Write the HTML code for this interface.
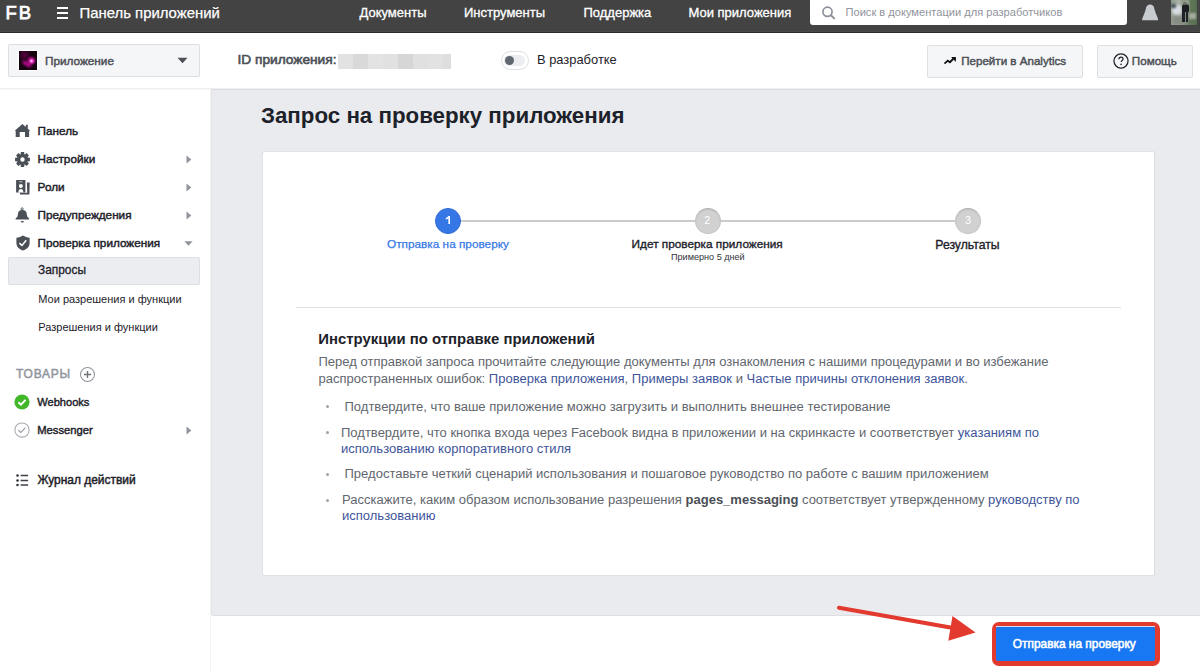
<!DOCTYPE html>
<html><head><meta charset="utf-8">
<style>
*{box-sizing:border-box;margin:0;padding:0}
html,body{width:1200px;height:672px;overflow:hidden;background:#fff;font-family:"Liberation Sans",sans-serif;color:#1d2129;position:relative}
.abs{position:absolute}
.t{position:absolute;white-space:pre;line-height:1}
</style></head><body>
<div class="abs" style="left:0px;top:0px;width:1200px;height:33px;background:#434343"></div>
<div class="abs" style="left:0px;top:31px;width:1200px;height:1px;background:#494949"></div>
<div class="abs" style="left:0px;top:32px;width:1200px;height:1px;background:#2b2b2b"></div>
<div class="t" style="left:5.40px;top:3.64px;font-size:18.5px;color:#fff;letter-spacing:2.1px;-webkit-text-stroke:0.75px #fff">FB</div>
<div class="abs" style="left:57px;top:7.2px;width:11px;height:2px;background:#fff"></div>
<div class="abs" style="left:57px;top:11.9px;width:11px;height:2px;background:#fff"></div>
<div class="abs" style="left:57px;top:16.7px;width:11px;height:2px;background:#fff"></div>
<div class="t" style="left:79.50px;top:6.48px;font-size:14.9px;color:#fff;-webkit-text-stroke:0.25px #fff">Панель приложений</div>
<div class="t" style="left:359.50px;top:6.19px;font-size:13px;color:#fff;-webkit-text-stroke:0.3px #fff">Документы</div>
<div class="t" style="left:464.00px;top:6.19px;font-size:13px;color:#fff;-webkit-text-stroke:0.3px #fff">Инструменты</div>
<div class="t" style="left:583.50px;top:6.19px;font-size:13px;color:#fff;-webkit-text-stroke:0.3px #fff">Поддержка</div>
<div class="t" style="left:688.50px;top:6.19px;font-size:13px;color:#fff;-webkit-text-stroke:0.3px #fff">Мои приложения</div>
<div class="abs" style="left:810px;top:0px;width:317px;height:25px;background:#fff;border-radius:0 0 3px 3px"></div>
<svg class="abs" style="left:821px;top:6px" width="15" height="15" viewBox="0 0 15 15"><circle cx="6.5" cy="5.8" r="4.6" fill="none" stroke="#8d929a" stroke-width="1.7"/><line x1="9.9" y1="9.2" x2="13.2" y2="12.4" stroke="#8d929a" stroke-width="2" stroke-linecap="round"/></svg>
<div class="t" style="left:845.50px;top:6.90px;font-size:11.1px;color:#90949c;">Поиск в документации для разработчиков</div>
<svg class="abs" style="left:1141px;top:3px" width="18" height="19" viewBox="0 0 18 19"><path d="M4.9 5.7C4.9 3.3 6.9 1.6 9.1 1.6C11.3 1.6 13.3 3.3 13.3 5.7C14.1 8.6 15.1 11.6 16.4 14.2C16.9 15.1 17.1 16.1 17.1 17.3H1.1C1.1 16.1 1.3 15.1 1.8 14.2C3.1 11.6 4.1 8.6 4.9 5.7Z" fill="#c8cbd0"/></svg>
<div class="abs" style="left:1171px;top:0;width:26px;height:25px;overflow:hidden;background:linear-gradient(90deg,#8f998b 0%,#a9b0a6 30%,#7f8a78 55%,#65765e 80%,#4a5e45 100%)"><div class="abs" style="left:1px;top:5px;width:10px;height:10px;background:#d9dde3;border-radius:40%;filter:blur(1.4px)"></div><div class="abs" style="left:0;top:4px;width:5px;height:4px;background:#46525e;filter:blur(0.9px)"></div><div class="abs" style="left:2px;top:16px;width:12px;height:9px;background:#878c84;filter:blur(1.5px)"></div><div class="abs" style="left:19px;top:0;width:7px;height:25px;background:#5d7356;filter:blur(1.5px)"></div><div class="abs" style="left:14px;top:0;width:4px;height:12px;background:#9aa796;filter:blur(1px)"></div><div class="abs" style="left:18px;top:13px;width:7px;height:6px;background:#a5ad9f;filter:blur(1.2px)"></div><div class="abs" style="left:10.5px;top:4px;width:7px;height:8px;background:#1c1e24;border-radius:3px 3px 1px 1px;filter:blur(0.5px)"></div><div class="abs" style="left:11px;top:11px;width:2.5px;height:11px;background:#20222b;filter:blur(0.4px)"></div><div class="abs" style="left:14.5px;top:11px;width:2.5px;height:11px;background:#20222b;filter:blur(0.4px)"></div><div class="abs" style="left:12px;top:1.5px;width:4px;height:3px;background:#6f6e66;border-radius:50%;filter:blur(0.4px)"></div></div>
<div class="abs" style="left:0px;top:33px;width:1200px;height:55px;background:#fff"></div>
<div class="abs" style="left:0px;top:88px;width:1200px;height:1px;background:#efeff0"></div>
<div class="abs" style="left:0px;top:89px;width:211px;height:1px;background:#f6f6f6"></div>
<div class="abs" style="left:211px;top:89px;width:989px;height:1px;background:#dcdde1"></div>
<div class="abs" style="left:8px;top:44px;width:192px;height:33px;background:#f5f6f7;border:1px solid #dddfe2;border-radius:2px"></div>
<div class="abs" style="left:18px;top:50px;width:20px;height:21px;background:#fff"></div>
<div class="abs" style="left:19px;top:51px;width:18px;height:19px;overflow:hidden;background:radial-gradient(circle at 32% 22%,rgba(150,0,110,0.55) 0,transparent 35%),#14020f"><div class="abs" style="left:3px;top:10.5px;width:10px;height:3.5px;border-radius:50%;background:#b80a8c;filter:blur(1.2px);transform:rotate(30deg)"></div><div class="abs" style="left:7px;top:5px;width:10px;height:9px;border-radius:50%;background:radial-gradient(circle at 55% 55%,#fff0ff 0,#f050d0 18%,rgba(180,10,140,0.75) 42%,rgba(120,0,90,0) 75%)"></div></div>
<div class="t" style="left:45.00px;top:54.85px;font-size:11.75px;-webkit-text-stroke:0.45px #4b4f56;color:#4b4f56;">Приложение</div>
<svg class="abs" style="left:177px;top:57px" width="11" height="7" viewBox="0 0 11 7"><path d="M0.5 0.8h10L5.5 6.3z" fill="#4b4f56"/></svg>
<div class="t" style="left:237.50px;top:53.10px;font-size:13.7px;-webkit-text-stroke:0.52px #4b4f56;color:#4b4f56;-webkit-text-stroke:0.62px #4b4f56">ID приложения:</div>
<div class="abs" style="left:338px;top:54px;width:15px;height:15px;background:#e2e2e2"></div>
<div class="abs" style="left:353px;top:54px;width:15px;height:15px;background:#d9d9d9"></div>
<div class="abs" style="left:368px;top:54px;width:15px;height:15px;background:#e3e3e3"></div>
<div class="abs" style="left:383px;top:54px;width:15px;height:15px;background:#e1e1e1"></div>
<div class="abs" style="left:398px;top:54px;width:15px;height:15px;background:#d6d6d6"></div>
<div class="abs" style="left:413px;top:54px;width:15px;height:15px;background:#e0e0e0"></div>
<div class="abs" style="left:428px;top:54px;width:15px;height:15px;background:#e2e2e2"></div>
<div class="abs" style="left:443px;top:54px;width:8px;height:15px;background:#dedede"></div>
<div class="abs" style="left:501px;top:51px;width:28px;height:19px;background:#fff;border:1px solid #dddfe2;border-radius:10px"></div>
<div class="abs" style="left:504px;top:55px;width:21px;height:11px;background:#ebedf0;border-radius:6px"></div>
<div class="abs" style="left:504.5px;top:55.8px;width:9.5px;height:9.5px;background:#606770;border-radius:50%"></div>
<div class="t" style="left:537.00px;top:54.08px;font-size:12.9px;color:#1d2129;">В разработке</div>
<div class="abs" style="left:927px;top:45px;width:156px;height:33px;background:#f5f6f7;border:1px solid #dddfe2;border-radius:2px"></div>
<svg class="abs" style="left:943px;top:56px" width="14" height="10" viewBox="0 0 14 10"><path d="M1.5 7.7L4.8 4.7 6.9 6.2 10.6 2.5" fill="none" stroke="#111" stroke-width="1.8"/><path d="M8.1 1.1H12.9V5.9z" fill="#111"/></svg>
<div class="t" style="left:961.20px;top:55.38px;font-size:11.6px;-webkit-text-stroke:0.44px #4b4f56;color:#4b4f56;">Перейти в Analytics</div>
<div class="abs" style="left:1097px;top:45px;width:96px;height:33px;background:#f5f6f7;border:1px solid #dddfe2;border-radius:2px"></div>
<svg class="abs" style="left:1112.6px;top:53.1px" width="16" height="16" viewBox="0 0 16 16"><circle cx="8" cy="8" r="7.05" fill="none" stroke="#1d2129" stroke-width="1.25"/><path d="M5.9 6.2c0-1.3 0.9-2.1 2.1-2.1s2.1 0.8 2.1 1.9c0 1.4-1.9 1.6-1.9 3.1" fill="none" stroke="#1d2129" stroke-width="1.2"/><circle cx="8.1" cy="11.4" r="0.8" fill="#1d2129"/></svg>
<div class="t" style="left:1131.80px;top:55.34px;font-size:11.65px;-webkit-text-stroke:0.44px #4b4f56;color:#4b4f56;">Помощь</div>
<div class="abs" style="left:0px;top:90px;width:211px;height:582px;background:#fff"></div>
<div class="abs" style="left:210px;top:90px;width:1px;height:582px;background:#f3f3f3"></div>
<div class="t" style="left:37.60px;top:125.05px;font-size:11.75px;-webkit-text-stroke:0.45px #1d2129;color:#1d2129;">Панель</div>
<div class="t" style="left:37.60px;top:153.05px;font-size:11.75px;-webkit-text-stroke:0.45px #1d2129;color:#1d2129;">Настройки</div>
<svg class="abs" style="left:186px;top:155px" width="6" height="9" viewBox="0 0 6 9"><path d="M0.5 0.6V8.4L5.3 4.5z" fill="#90949c"/></svg>
<div class="t" style="left:37.60px;top:181.05px;font-size:11.75px;-webkit-text-stroke:0.45px #1d2129;color:#1d2129;">Роли</div>
<svg class="abs" style="left:186px;top:183px" width="6" height="9" viewBox="0 0 6 9"><path d="M0.5 0.6V8.4L5.3 4.5z" fill="#90949c"/></svg>
<div class="t" style="left:37.60px;top:209.25px;font-size:11.75px;-webkit-text-stroke:0.45px #1d2129;color:#1d2129;">Предупреждения</div>
<svg class="abs" style="left:186px;top:211.2px" width="6" height="9" viewBox="0 0 6 9"><path d="M0.5 0.6V8.4L5.3 4.5z" fill="#90949c"/></svg>
<div class="t" style="left:37.60px;top:237.05px;font-size:11.75px;-webkit-text-stroke:0.45px #1d2129;color:#1d2129;">Проверка приложения</div>
<svg class="abs" style="left:184px;top:241px" width="9" height="5" viewBox="0 0 9 5"><path d="M0.3 0.3H8.7L4.5 4.7z" fill="#90949c"/></svg>
<svg class="abs" style="left:15px;top:123px" width="15" height="15" viewBox="0 0 15 15"><path d="M7.4 0.9L-0.1 7.5 0.7 8.3V14.1H4.7V8.9H10V14.1H14.1V8.3L14.9 7.5 12.8 5.7V1.7H10.8V3.9Z" fill="#4b4f56"/></svg>
<svg class="abs" style="left:15px;top:152px" width="15" height="15" viewBox="0 0 15 15"><path d="M12.55 5.60 L14.92 5.84 L14.92 9.16 L12.55 9.40 L12.42 9.73 L13.92 11.57 L11.57 13.92 L9.73 12.42 L9.40 12.55 L9.16 14.92 L5.84 14.92 L5.60 12.55 L5.27 12.42 L3.43 13.92 L1.08 11.57 L2.58 9.73 L2.45 9.40 L0.08 9.16 L0.08 5.84 L2.45 5.60 L2.58 5.27 L1.08 3.43 L3.43 1.08 L5.27 2.58 L5.60 2.45 L5.84 0.08 L9.16 0.08 L9.40 2.45 L9.73 2.58 L11.57 1.08 L13.92 3.43 L12.42 5.27Z M7.5 5.3 A2.2 2.2 0 1 0 7.5 9.7 A2.2 2.2 0 1 0 7.5 5.3Z" fill="#4b4f56" fill-rule="evenodd"/></svg>
<svg class="abs" style="left:15px;top:179px" width="16" height="16" viewBox="0 0 16 16"><path d="M1.1 1.4Q1.1 0.9 1.6 0.9H9.9Q10.4 0.9 10.4 1.4V13.4H1.1Z" fill="#4b4f56"/><path d="M4 2.1H7.6V3.3H4z" fill="#a3a6ab"/><circle cx="5.85" cy="6.9" r="2" fill="#fff"/><path d="M3.4 13.4C3.4 11.2 4.4 10.1 5.85 10.1S8.3 11.2 8.3 13.4z" fill="#fff"/><path d="M11.9 3.6H14.7L14.4 15.4H5V13.7H12.2z" fill="#4b4f56"/></svg>
<svg class="abs" style="left:15px;top:206.5px" width="15" height="16" viewBox="0 0 15 16"><circle cx="7.1" cy="1.9" r="1.1" fill="none" stroke="#4b4f56" stroke-width="0.9"/><path d="M7.1 2.9C4.3 2.9 3 4.8 2.9 7.2C2.8 9.2 2.2 10.3 0.6 11.4V12.4H14.1V11.4C12.5 10.3 11.9 9.2 11.8 7.2C11.7 4.8 10.4 2.9 7.1 2.9z" fill="#4b4f56"/><ellipse cx="7.3" cy="14.8" rx="1.8" ry="0.8" fill="#4b4f56"/></svg>
<svg class="abs" style="left:15.6px;top:235px" width="14" height="16" viewBox="0 0 14 16"><path d="M7 0.4C5 1.6 3 2.3 0.4 2.8V8C0.4 11.8 3 14.2 7 15.5 11 14.2 13.6 11.8 13.6 8V2.8C11 2.3 9 1.6 7 0.4z" fill="#4b4f56"/><path d="M3.4 8.1L6 10.4 10.2 5.3" fill="none" stroke="#fff" stroke-width="1.5"/></svg>
<div class="abs" style="left:8px;top:257px;width:192px;height:28px;background:#ebedf0;border:1px solid #dddfe2;border-radius:2px"></div>
<div class="t" style="left:38.00px;top:265.42px;font-size:11.9px;-webkit-text-stroke:0.45px #1d2129;color:#1d2129;-webkit-text-stroke:0.3px #1d2129">Запросы</div>
<div class="t" style="left:38.30px;top:293.79px;font-size:11px;color:#1d2129;">Мои разрешения и функции</div>
<div class="t" style="left:38.30px;top:321.69px;font-size:11px;color:#1d2129;">Разрешения и функции</div>
<div class="t" style="left:16.00px;top:367.84px;font-size:12px;-webkit-text-stroke:0.46px #90949c;color:#90949c;letter-spacing:0.75px">ТОВАРЫ</div>
<svg class="abs" style="left:79px;top:366px" width="17" height="17" viewBox="0 0 17 17"><circle cx="8.5" cy="8.5" r="7" fill="none" stroke="#90949c" stroke-width="1.05"/><path d="M8.5 4.9v7.2M4.9 8.5h7.2" stroke="#6f747b" stroke-width="1.4"/></svg>
<svg class="abs" style="left:14px;top:394px" width="16" height="16" viewBox="0 0 16 16"><circle cx="8" cy="8" r="7.6" fill="#42b72a"/><path d="M4.4 8.2l2.5 2.4 4.7-4.8" fill="none" stroke="#fff" stroke-width="1.9"/></svg>
<div class="t" style="left:37.20px;top:396.90px;font-size:11.1px;-webkit-text-stroke:0.42px #1d2129;color:#1d2129;">Webhooks</div>
<svg class="abs" style="left:14px;top:422px" width="16" height="16" viewBox="0 0 16 16"><circle cx="8" cy="8" r="7.1" fill="none" stroke="#a7abb1" stroke-width="1.05"/><path d="M4.4 8.2l2.4 2.3 4.6-4.8" fill="none" stroke="#90949c" stroke-width="1.05"/></svg>
<div class="t" style="left:37.20px;top:424.97px;font-size:11.25px;-webkit-text-stroke:0.43px #1d2129;color:#1d2129;">Messenger</div>
<svg class="abs" style="left:186px;top:425.5px" width="6" height="9" viewBox="0 0 6 9"><path d="M0.5 0.6V8.4L5.3 4.5z" fill="#90949c"/></svg>
<svg class="abs" style="left:16px;top:474px" width="13" height="13" viewBox="0 0 13 13"><circle cx="1.5" cy="1.6" r="1.25" fill="#2a2d33"/><circle cx="1.5" cy="6.4" r="1.25" fill="#2a2d33"/><circle cx="1.5" cy="11" r="1.25" fill="#2a2d33"/><path d="M4.6 1.6h7.5M4.6 6.4h7.5M4.6 11h7.5" stroke="#3d4046" stroke-width="1.5"/></svg>
<div class="t" style="left:37.40px;top:475.08px;font-size:11.95px;-webkit-text-stroke:0.45px #1d2129;color:#1d2129;">Журнал действий</div>
<div class="abs" style="left:211px;top:90px;width:989px;height:525px;background:#e9ebee"></div>
<div class="abs" style="left:211px;top:90px;width:1px;height:525px;background:#e2e4e7"></div>
<div class="t" style="left:261.00px;top:104.72px;font-size:22.3px;font-weight:bold;color:#1d2129;">Запрос на проверку приложения</div>
<div class="abs" style="left:262px;top:151px;width:893px;height:425px;background:#fff;border:1px solid #e0e2e5;border-right-color:#dadde1;border-radius:2.5px"></div>
<div class="abs" style="left:460px;top:219.6px;width:496px;height:2.7px;background:#cbcbcb"></div>
<div class="abs" style="left:434.8px;top:207.6px;width:26px;height:26px;background:#3578e5;border:1px solid #2f6bd6;border-radius:50%"></div>
<div class="abs" style="left:694.6px;top:207.5px;width:26px;height:26px;background:#d1d1d1;border:1px solid #c4c4c4;border-top-color:#b3b3b3;border-radius:50%;box-shadow:inset 0 1px 1px rgba(0,0,0,0.08)"></div>
<div class="abs" style="left:955.3px;top:207.5px;width:26px;height:26px;background:#d1d1d1;border:1px solid #c4c4c4;border-top-color:#b3b3b3;border-radius:50%;box-shadow:inset 0 1px 1px rgba(0,0,0,0.08)"></div>
<svg class="abs" style="left:444px;top:215px" width="8" height="10" viewBox="0 0 8 10"><path d="M4.4 1H6V9.1H4.4V3.2C3.8 3.8 3 4.2 1.8 4.5V3.1C3 2.7 3.8 2 4.4 1z" fill="#fff"/></svg>
<div class="t" style="left:704.30px;top:215.26px;font-size:10.8px;color:#fff;">2</div>
<div class="t" style="left:965.00px;top:215.26px;font-size:10.8px;color:#fff;">3</div>
<div class="t" style="left:387.00px;top:239.21px;font-size:11.8px;color:#3578e5;-webkit-text-stroke:0.25px #3578e5">Отправка на проверку</div>
<div class="t" style="left:631.60px;top:239.21px;font-size:11.8px;-webkit-text-stroke:0.45px #1d2129;color:#1d2129;-webkit-text-stroke:0.36px #1d2129">Идет проверка приложения</div>
<div class="t" style="left:671.00px;top:252.80px;font-size:9.1px;color:#30343a;">Примерно 5 дней</div>
<div class="t" style="left:935.30px;top:238.87px;font-size:12.2px;-webkit-text-stroke:0.46px #1d2129;color:#1d2129;-webkit-text-stroke:0.36px #1d2129">Результаты</div>
<div class="abs" style="left:296px;top:307px;width:825px;height:1px;background:#dddfe2"></div>
<div class="t" style="left:318.30px;top:331.88px;font-size:14.9px;font-weight:bold;color:#1d2129;">Инструкции по отправке приложений</div>
<div class="t" style="left:318.50px;top:354.77px;font-size:13.03px;color:#62666e;">Перед отправкой запроса прочитайте следующие документы для ознакомления с нашими процедурами и во избежание</div>
<div class="t" style="left:318.50px;top:371.77px;font-size:13.03px;color:#62666e;">распространенных ошибок: <span style="color:#40559b">Проверка приложения</span>, <span style="color:#40559b">Примеры заявок</span> и <span style="color:#40559b">Частые причины отклонения заявок</span>.</div>
<div class="abs" style="left:326.3px;top:405px;width:3px;height:3px;background:#a0a4aa;border-radius:50%"></div>
<div class="t" style="left:344.50px;top:399.77px;font-size:13.03px;color:#62666e;">Подтвердите, что ваше приложение можно загрузить и выполнить внешнее тестирование</div>
<div class="abs" style="left:326.3px;top:431px;width:3px;height:3px;background:#a0a4aa;border-radius:50%"></div>
<div class="t" style="left:341.00px;top:425.87px;font-size:13.03px;color:#62666e;">Подтвердите, что кнопка входа через Facebook видна в приложении и на скринкасте и соответствует <span style="color:#40559b">указаниям по</span></div>
<div class="t" style="left:341.00px;top:442.27px;font-size:13.03px;color:#62666e;"><span style="color:#40559b">использованию корпоративного стиля</span></div>
<div class="abs" style="left:326.3px;top:472.5px;width:3px;height:3px;background:#a0a4aa;border-radius:50%"></div>
<div class="t" style="left:344.50px;top:467.07px;font-size:13.03px;color:#62666e;">Предоставьте четкий сценарий использования и пошаговое руководство по работе с вашим приложением</div>
<div class="abs" style="left:326.3px;top:498.5px;width:3px;height:3px;background:#a0a4aa;border-radius:50%"></div>
<div class="t" style="left:342.00px;top:492.57px;font-size:13.03px;color:#62666e;">Расскажите, каким образом использование разрешения <b style="color:#4b4f56">pages_messaging</b> соответствует утвержденному <span style="color:#40559b">руководству по</span></div>
<div class="t" style="left:342.00px;top:508.97px;font-size:13.03px;color:#62666e;"><span style="color:#40559b">использованию</span></div>
<div class="abs" style="left:212px;top:615px;width:988px;height:57px;background:#fff"></div>
<div class="abs" style="left:212px;top:615px;width:988px;height:1px;background:#dddfe2"></div>
<div class="abs" style="left:992px;top:622px;width:168px;height:44px;background:#e23a2e;border-radius:7px"></div>
<div class="abs" style="left:995.8px;top:626.6px;width:159.6px;height:34.6px;background:#1877f2;border-radius:2px"></div>
<div class="abs" style="left:995.8px;top:626.2px;width:159.6px;height:1.2px;background:#cfe0f8"></div>
<div class="t" style="left:1012.80px;top:638.62px;font-size:11.9px;-webkit-text-stroke:0.45px #fff;color:#fff;-webkit-text-stroke:0.55px #fff">Отправка на проверку</div>
<svg class="abs" style="left:0;top:0" width="1200" height="672" viewBox="0 0 1200 672"><line x1="839" y1="607.8" x2="956" y2="628.5" stroke="#e23a2e" stroke-width="4.1" stroke-linecap="round"/><path d="M952.5 616L975.5 632.5 948.3 640.8z" fill="#e23a2e"/></svg>
</body></html>
